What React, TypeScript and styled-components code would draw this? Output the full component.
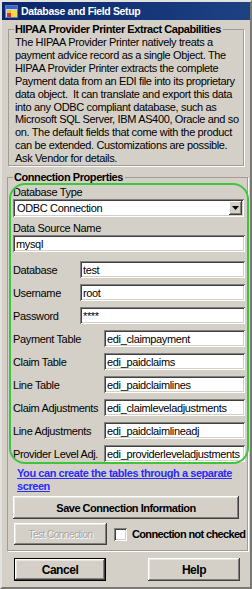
import React from "react";
import styled, { createGlobalStyle } from "styled-components";

const Global = createGlobalStyle`
  html, body { margin: 0; padding: 0; background: #d4d0c8; }
  body { font-family: "Liberation Sans", Arial, sans-serif; font-size: 11px; color: #000; letter-spacing: -0.35px; }
  * { box-sizing: border-box; }
`;

const Window = styled.div`
  position: relative;
  width: 252px;
  height: 589px;
  background: #d4d0c8;
  border: 2px solid;
  border-color: #e4e2de #7a7874 #7a7874 #e4e2de;
  display: flex;
  flex-direction: column;
  overflow: hidden;
`;

const TitleBar = styled.div`
  height: 18px;
  flex-shrink: 0;
  display: flex;
  align-items: center;
  gap: 3px;
  padding-left: 3px;
  background: linear-gradient(to right, #0a266c, #1d4283);
  color: #fff;
  font-weight: bold;
  font-size: 10.5px;
  letter-spacing: -0.35px;
  white-space: nowrap;
`;

const Content = styled.div`
  flex: 1;
  display: flex;
  flex-direction: column;
  padding: 3px 6px 0 6px;
`;

const Group = styled.fieldset<{ $wide?: boolean }>`
  display: flex;
  flex-direction: column;
  margin: ${(p) => (p.$wide ? "5px -4px 0 -1px" : "0")};
  padding: ${(p) => (p.$wide ? "0 2px 5px 5px" : "0 4px 0 5px")};
  border: 1px solid #a09d96;
  box-shadow: 1px 1px 0 #fff;
  min-width: 0;
`;

const Legend = styled.legend`
  padding: 0 2px 0 1px;
  font-weight: bold;
  font-size: 11px;
  line-height: 13px;
  letter-spacing: -0.43px;
  white-space: nowrap;
  background: #d4d0c8;
`;

const Para = styled.p`
  margin: 0;
  padding-left: 1px;
  font-size: 11px;
  line-height: 12.9px;
`;

const Label = styled.div<{ $mt?: number }>`
  font-size: 11px;
  line-height: 13px;
  margin-top: ${(p) => p.$mt ?? 0}px;
`;

const sunken = `
  background: #fff;
  border: none;
  box-shadow: inset 1px 1px 0 #808080, inset -1px -1px 0 #fff, inset 2px 2px 0 #404040, inset -2px -2px 0 #d4d0c8;
`;

const Select = styled.div`
  ${sunken}
  height: 18px;
  display: flex;
  align-items: center;
  padding: 2px 2px 2px 4px;
  font-size: 11px;
  margin-right: 1px;
`;

const SelectText = styled.span`
  flex: 1;
`;

const DropBtn = styled.div`
  width: 13px;
  height: 14px;
  background: #d4d0c8;
  box-shadow: inset -1px -1px 0 #404040, inset 1px 1px 0 #fff, inset -2px -2px 0 #808080;
  display: flex;
  align-items: center;
  justify-content: center;
`;

const Input = styled.input`
  ${sunken}
  height: 17px;
  width: 100%;
  min-width: 0;
  padding: 2px 2px 1px 3px;
  font-family: "Liberation Sans", Arial, sans-serif;
  font-size: 11px;
  letter-spacing: -0.35px;
  color: #000;
  outline: none;
`;

const Rows = styled.div`
  display: flex;
  flex-direction: column;
  gap: 6px;
  margin-top: 9px;
`;

const Row = styled.div<{ $labelW: number }>`
  display: grid;
  grid-template-columns: ${(p) => p.$labelW}px 1fr;
  align-items: center;
  height: 17px;
`;

const RowLabel = styled.span`
  font-size: 11px;
  white-space: nowrap;
`;

const Link = styled.a`
  display: block;
  margin: 5px 0 0 4px;
  color: #2b2bff;
  font-weight: bold;
  font-size: 11px;
  line-height: 13px;
  letter-spacing: -0.43px;
  text-decoration: underline;
  cursor: pointer;
`;

const Button = styled.button<{ $default?: boolean; $disabled?: boolean }>`
  flex-shrink: 0;
  height: 23px;
  background: #d4d0c8;
  border: ${(p) => (p.$default ? "1px solid #000" : "none")};
  box-shadow: inset -1px -1px 0 #404040, inset 1px 1px 0 #fff, inset -2px -2px 0 #808080, inset 2px 2px 0 #e8e6e2;
  font-family: "Liberation Sans", Arial, sans-serif;
  font-weight: ${(p) => (p.$disabled ? "normal" : "bold")};
  font-size: ${(p) => (p.$disabled ? "10px" : "11px")};
  letter-spacing: -0.5px;
  color: ${(p) => (p.$disabled ? "#a8a59f" : "#000")};
  text-shadow: ${(p) => (p.$disabled ? "1px 1px 0 #fff" : "none")};
  padding: 0;
`;

const SaveButton = styled(Button)`
  margin: 3px 6px 0 0;
`;

const TestRow = styled.div`
  display: flex;
  align-items: center;
  margin-top: 4px;
  padding-left: 1px;
`;

const TestButton = styled(Button)`
  width: 93px;
  height: 22px;
`;

const Check = styled.span`
  ${sunken}
  flex-shrink: 0;
  width: 13px;
  height: 13px;
  margin-left: 7px;
  display: inline-block;
`;

const CheckLabel = styled.span`
  margin-left: 5px;
  font-weight: bold;
  font-size: 11px;
  letter-spacing: -0.65px;
  white-space: nowrap;
`;

const Footer = styled.div`
  display: flex;
  justify-content: space-between;
  margin: 7px 4px 0 6px;
`;

const FooterButton = styled(Button)`
  width: 92px;
  height: 23px;
  font-size: 12px;
  letter-spacing: -0.45px;
`;

const Highlight = styled.div`
  position: absolute;
  left: 7px;
  top: 181px;
  width: 240px;
  height: 281px;
  border: 2px solid #3cc63c;
  border-radius: 16px;
  pointer-events: none;
`;

const AppIcon = () => (
  <svg width="13" height="13" viewBox="0 0 13 13">
    <rect x="0.5" y="0.5" width="12" height="12" fill="#c8d8f0" stroke="#5a7ab8" />
    <rect x="1" y="1" width="11" height="3" fill="#3a64c8" />
    <rect x="2" y="5" width="4" height="3" fill="#f2c21a" />
    <rect x="2" y="8" width="4" height="4" fill="#e0301e" />
    <rect x="7" y="5" width="5" height="7" fill="#f6d84a" />
  </svg>
);

const fields: { label: string; value: string; w: number }[] = [
  { label: "Database", value: "test", w: 67 },
  { label: "Username", value: "root", w: 67 },
  { label: "Password", value: "****", w: 67 },
  { label: "Payment Table", value: "edi_claimpayment", w: 91 },
  { label: "Claim Table", value: "edi_paidclaims", w: 91 },
  { label: "Line Table", value: "edi_paidclaimlines", w: 91 },
  { label: "Claim Adjustments", value: "edi_claimleveladjustments", w: 91 },
  { label: "Line Adjustments", value: "edi_paidclaimlineadj", w: 91 },
  { label: "Provider Level Adj.", value: "edi_providerleveladjustments", w: 91 },
];

export default function App() {
  return (
    <>
      <Global />
      <Window>
        <TitleBar>
          <AppIcon />
          <span>Database and Field Setup</span>
        </TitleBar>
        <Content>
          <Group>
            <Legend>HIPAA Provider Printer Extract Capabilities</Legend>
            <Para>
              The HIPAA Provider Printer natively treats a payment advice record as a single Object. The HIPAA
              Provider Printer extracts the complete Payment data from an EDI file into its proprietary data
              object.&nbsp; It can translate and export this data into any ODBC compliant database, such as
              Microsoft SQL Server, IBM AS400, Oracle and so on. The default fields that come with the product
              can be extended. Customizations are possible. Ask Vendor for details.
            </Para>
          </Group>
          <Group $wide>
            <Legend>Connection Properties</Legend>
            <Label $mt={2}>Database Type</Label>
            <Select>
              <SelectText>ODBC Connection</SelectText>
              <DropBtn>
                <svg width="7" height="4" viewBox="0 0 7 4">
                  <path d="M0 0h7L3.5 4z" fill="#000" />
                </svg>
              </DropBtn>
            </Select>
            <Label $mt={5}>Data Source Name</Label>
            <Input readOnly defaultValue="mysql" />
            <Rows>
              {fields.map((f) => (
                <Row key={f.label} $labelW={f.w}>
                  <RowLabel>{f.label}</RowLabel>
                  <Input readOnly defaultValue={f.value} />
                </Row>
              ))}
            </Rows>
            <Link>
              You can create the tables through a separate
              <br />
              screen
            </Link>
            <SaveButton>Save Connection Information</SaveButton>
            <TestRow>
              <TestButton $disabled>Test Connection</TestButton>
              <Check />
              <CheckLabel>Connection not checked</CheckLabel>
            </TestRow>
          </Group>
          <Footer>
            <FooterButton $default>Cancel</FooterButton>
            <FooterButton>Help</FooterButton>
          </Footer>
        </Content>
        <Highlight />
      </Window>
    </>
  );
}
